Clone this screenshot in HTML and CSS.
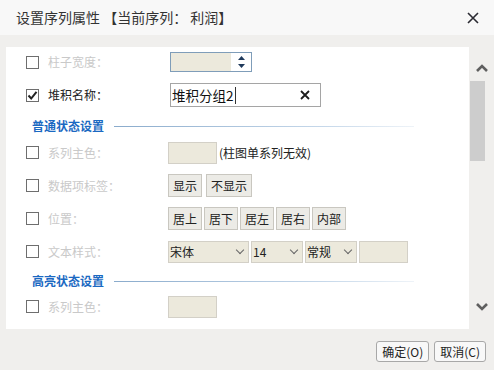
FILE: index.html
```html
<!DOCTYPE html>
<html lang="zh">
<head>
  <meta charset="UTF-8" />
  <title>设置序列属性</title>
  <link rel="stylesheet" href="styles.css">
</head>
<body>
  <div class="dialog">
    <div class="titlebar">
      <span class="title">设置序列属性 【当前序列： 利润】</span>
      <svg class="close" width="14" height="14" viewBox="0 0 14 14">
        <path d="M2 2 L12 12 M12 2 L2 12" stroke="#2b2b33" stroke-width="1.6" fill="none" />
      </svg>
    </div>

    <div class="body">
      <div class="panel">
        <div class="row row-first">
          <span class="check"></span>
          <span class="label off">柱子宽度：</span>
          <div class="spinner">
            <span class="spin-value"></span>
            <span class="spin-arrows">
              <svg width="9" height="14" viewBox="0 0 9 14">
                <path d="M4.5 1 L8 5 L1 5 Z" fill="#1f3a5c" />
                <path d="M1 9 L8 9 L4.5 13 Z" fill="#1f3a5c" />
              </svg>
            </span>
          </div>
        </div>

        <div class="row row-second">
          <span class="check on">
            <svg width="11" height="11" viewBox="0 0 11 11">
              <path d="M1.5 5.5 L4.2 8.5 L9.5 1.8" stroke="#222" stroke-width="2" fill="none" />
            </svg>
          </span>
          <span class="label">堆积名称：</span>
          <div class="text-input">
            <span class="text-value">堆积分组2</span><span class="caret"></span>
            <svg class="clear" width="12" height="12" viewBox="0 0 12 12">
              <path d="M2 2 L10 10 M10 2 L2 10" stroke="#1c1c1c" stroke-width="1.8" fill="none" />
            </svg>
          </div>
        </div>

        <div class="section section-first">
          <span class="section-title">普通状态设置</span>
          <span class="section-line"></span>
        </div>

        <div class="row">
          <span class="check"></span>
          <span class="label off">系列主色：</span>
          <span class="swatch"></span>
          <span class="note">(柱图单系列无效)</span>
        </div>

        <div class="row">
          <span class="check"></span>
          <span class="label off">数据项标签：</span>
          <div class="btn-group wide-gap">
            <span class="opt">显示</span>
            <span class="opt">不显示</span>
          </div>
        </div>

        <div class="row">
          <span class="check"></span>
          <span class="label off">位置：</span>
          <div class="btn-group">
            <span class="opt">居上</span>
            <span class="opt">居下</span>
            <span class="opt">居左</span>
            <span class="opt">居右</span>
            <span class="opt">内部</span>
          </div>
        </div>

        <div class="row">
          <span class="check"></span>
          <span class="label off">文本样式：</span>
          <div class="select-group">
            <span class="select font-select">宋体<i class="chev"></i></span>
            <span class="select size-select">14<i class="chev"></i></span>
            <span class="select weight-select">常规<i class="chev"></i></span>
            <span class="swatch small"></span>
          </div>
        </div>

        <div class="section section-second">
          <span class="section-title">高亮状态设置</span>
          <span class="section-line"></span>
        </div>

        <div class="row row-last">
          <span class="check"></span>
          <span class="label off">系列主色：</span>
          <span class="swatch"></span>
        </div>
      </div>

      <div class="scrollbar">
        <svg width="14" height="12" viewBox="0 0 14 12">
          <path d="M2 9 L7 4 L12 9" stroke="#5f5f5f" stroke-width="2.6" fill="none" />
        </svg>
        <div class="thumb"></div>
        <div class="spacer"></div>
        <svg width="14" height="12" viewBox="0 0 14 12">
          <path d="M2 3 L7 8 L12 3" stroke="#5f5f5f" stroke-width="2.6" fill="none" />
        </svg>
      </div>
    </div>

    <div class="footer">
      <span class="action">确定(O)</span>
      <span class="action">取消(C)</span>
    </div>
  </div>
</body>
</html>
```

FILE: styles.css
```css
body {
  margin: 0;
  background: #f0efed;
  font-family: "Noto Sans CJK SC", "Liberation Sans", sans-serif;
  color: #222;
}
.dialog {
  width: 494px;
  height: 370px;
  display: flex;
  flex-direction: column;
  background: #f0efed;
}
.titlebar {
  height: 35px;
  flex: none;
  display: flex;
  align-items: center;
  justify-content: space-between;
  padding: 0 16px;
  background: #f8f8f8;
}
.title {
  font-size: 14px;
  line-height: 16px;
  color: #333;
  margin-top: -1px;
}
.close {
  margin-right: -2px;
}
.body {
  display: flex;
  padding-top: 12px;
  height: 282px;
  flex: none;
}
.panel {
  margin-left: 6px;
  width: 463px;
  height: 282px;
  background: #fff;
  overflow: hidden;
}
.row {
  display: flex;
  align-items: center;
  height: 33px;
  font-size: 12px;
  line-height: 14px;
}
.row-first {
  height: 30px;
}
.row-second {
  height: 36px;
}
.row-last {
  height: 25px;
}
.check {
  width: 11px;
  height: 11px;
  border: 1px solid #6e6e6e;
  margin-left: 20px;
  flex: none;
  display: flex;
  align-items: center;
  justify-content: center;
}
.label {
  width: 120px;
  margin-left: 9px;
  flex: none;
  color: #222;
}
.label.off {
  color: #c9c9c9;
}
.spinner {
  margin-left: 2px;
  width: 80px;
  height: 18px;
  border: 1px solid #7f9db9;
  display: flex;
}
.spin-value {
  width: 60px;
  background: #ece9dc;
}
.spin-arrows {
  flex: 1;
  background: #fff;
  display: flex;
  align-items: center;
  justify-content: center;
}
.text-input {
  margin-left: 2px;
  width: 149px;
  height: 22px;
  border: 1px solid #a5a5a5;
  display: flex;
  align-items: center;
  position: relative;
}
.text-value {
  font-size: 13.5px;
  line-height: 16px;
  color: #111;
  padding-left: 1px;
}
.caret {
  width: 1px;
  height: 17px;
  background: #333;
  margin-left: 1px;
}
.clear {
  margin-left: auto;
  margin-right: 9px;
}
.section {
  display: flex;
  align-items: center;
  padding-left: 26px;
}
.section-first {
  height: 23px;
  padding-top: 3px;
  box-sizing: border-box;
}
.section-second {
  height: 26px;
}
.section-title {
  font-size: 12px;
  line-height: 14px;
  font-weight: bold;
  color: #1b69c2;
}
.section-line {
  margin-left: 10px;
  width: 300px;
  height: 1px;
  background: linear-gradient(to right, #8aabcc, #c6d8ea 70%, #eef3f8);
}
.swatch {
  width: 47px;
  height: 20px;
  background: #ece9dc;
  border: 1px solid #d3d0c7;
  flex: none;
}
.swatch.small {
  width: 47px;
}
.note {
  margin-left: 2px;
  color: #222;
}
.btn-group {
  display: flex;
  gap: 2px;
}
.btn-group.wide-gap {
  gap: 4px;
}
.opt {
  height: 21px;
  line-height: 21px;
  padding: 0 4px;
  background: #ecebe6;
  border: 1px solid #c9c7c0;
  color: #222;
}
.select-group {
  display: flex;
  gap: 2px;
}
.select {
  height: 20px;
  line-height: 20px;
  background: #ece9dc;
  border: 1px solid #d3d0c7;
  display: flex;
  align-items: center;
  padding-left: 1px;
  box-sizing: content-box;
}
.font-select {
  width: 78px;
}
.size-select {
  width: 49px;
}
.weight-select {
  width: 49px;
}
.chev {
  margin-left: auto;
  margin-right: 5px;
  width: 5px;
  height: 5px;
  border-right: 1px solid #666;
  border-bottom: 1px solid #666;
  transform: rotate(45deg);
  margin-top: -4px;
}
.scrollbar {
  width: 25px;
  height: 282px;
  display: flex;
  flex-direction: column;
  align-items: center;
  padding-top: 15px;
  padding-bottom: 16px;
  box-sizing: border-box;
}
.thumb {
  margin-top: 7px;
  width: 15px;
  height: 80px;
  background: #cdcdcd;
  margin-left: -8px;
}
.spacer {
  flex: 1;
}
.footer {
  display: flex;
  justify-content: flex-end;
  gap: 5px;
  padding: 12px 8px 0 0;
}
.action {
  height: 19px;
  line-height: 19px;
  padding: 0 5px;
  border: 1px solid #a8a8a8;
  border-radius: 3px;
  background: #f8f8f8;
  font-size: 12px;
  color: #222;
}
```
